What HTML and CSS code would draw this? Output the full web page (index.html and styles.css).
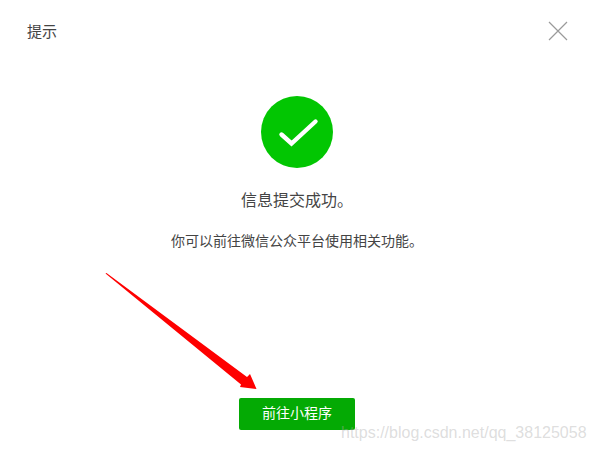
FILE: index.html
```html
<!DOCTYPE html>
<html lang="zh">
<head>
<meta charset="utf-8">
<title>提示</title>
<link rel="stylesheet" href="styles.css">
</head>
<body>
<div class="dialog">
  <header class="head">
    <span class="title">提示</span>
    <svg class="close" width="20" height="20" viewBox="0 0 20 20"><path d="M1 1L19 19M19 1L1 19" stroke="#9a9a9a" stroke-width="1.2" fill="none"/></svg>
  </header>
  <main class="body">
    <svg class="ok" width="72" height="72" viewBox="0 0 72 72"><circle cx="36" cy="36" r="36" fill="#02c602"/><path d="M20.500 38.500L30.500 47.500L54.500 25.500" stroke="#fff" stroke-width="4.400" stroke-linecap="round" stroke-linejoin="miter" fill="none"/></svg>
    <h1 class="msg">信息提交成功。</h1>
    <p class="sub">你可以前往微信公众平台使用相关功能。</p>
  </main>
  <footer class="foot"><button class="btn"><span class="btn-label">前往小程序</span></button></footer>
  <svg class="arrow" width="160" height="125" viewBox="100 270 160 125"><path d="M105.500 273.500L106.500 273L247 377L250 374L256.500 389L240 387L241 384.500Z" fill="#fe0000"/></svg>
  <span class="mark">https://blog.csdn.net/qq_38125058</span>
</div>
</body>
</html>
```
FILE: styles.css
```css
html, body { margin: 0; padding: 0; background: #fff; }
body { font-family: "Noto Sans CJK SC", "Liberation Sans", sans-serif; color: #444; }
.dialog { position: relative; width: 595px; height: 452px; overflow: hidden; }
.head { display: flex; justify-content: space-between; align-items: center; height: 62px; padding: 0 27px 0 27px; box-sizing: border-box; }
.title { font-size: 15px; line-height: 20px; margin-top: -1px; }
.close { display: block; }
.body { display: flex; flex-direction: column; align-items: center; padding: 34px 1px 0 0; height: 302px; box-sizing: border-box; }
.ok { display: block; }
.msg { margin: 19px 0 0; font-size: 16px; font-weight: 400; line-height: 24px; }
.sub { margin: 19px 0 0; font-size: 14px; line-height: 20px; }
.foot { display: flex; justify-content: center; padding-right: 1px; margin-top: 34px; }
.btn { width: 116px; height: 32px; border: 0; border-radius: 2px; background: #04aa04; color: #fff; font: inherit; font-size: 14px; padding: 0; }
.btn-label { display: block; margin-top: -5px; }
.arrow { position: absolute; left: 100px; top: 270px; }
.mark { position: absolute; left: 341px; top: 423px; font-family: "Liberation Sans", sans-serif; font-size: 16px; line-height: 20px; color: rgba(170,170,170,0.4); white-space: nowrap; }
```
